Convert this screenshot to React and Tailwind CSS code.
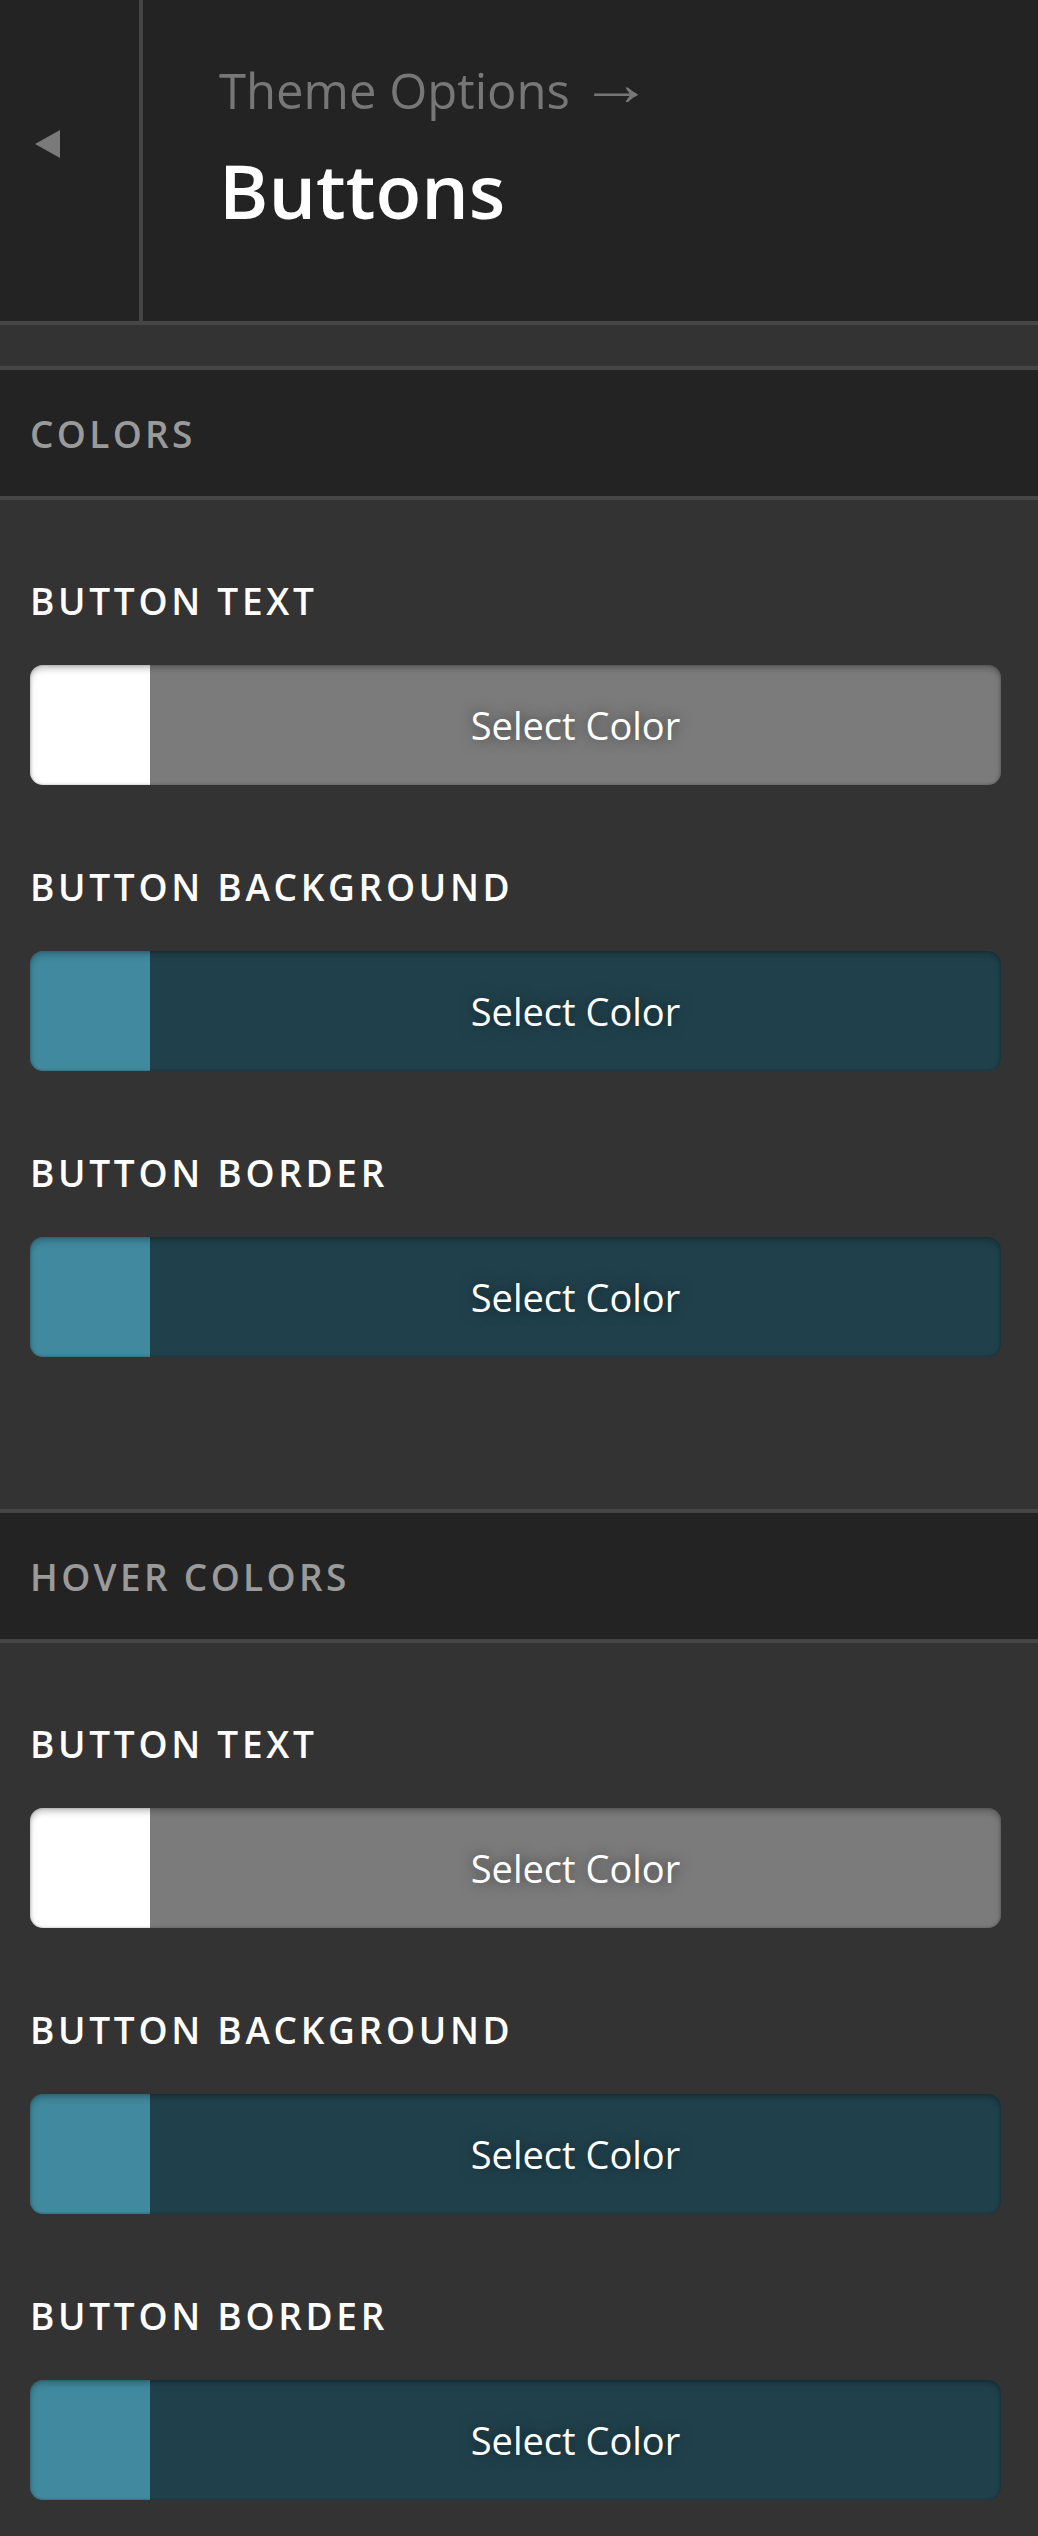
import React from "react";

const fields = [
  { label: "BUTTON TEXT", swatch: "bg-white", bar: "bg-[#7b7b7b]" },
  { label: "BUTTON BACKGROUND", swatch: "bg-[#40899e]", bar: "bg-[#20414c]" },
  { label: "BUTTON BORDER", swatch: "bg-[#40899e]", bar: "bg-[#20414c]" },
];

const ColorField = ({ label, swatch, bar }) => {
  return (
    <div className="flex flex-col">
      <label className="text-white text-[37px] leading-[37px] font-semibold tracking-[0.1em]">
        {label}
      </label>
      <button className="relative mt-[46px] flex h-[120px] w-full overflow-hidden rounded-[13px]">
        <span className={`${swatch} h-full w-[120px] shrink-0`} />
        <span
          className={`${bar} flex h-full flex-1 items-center justify-center text-[38px] text-white [text-shadow:0_0_14px_rgba(0,0,0,0.5)]`}
        >
          Select Color
        </span>
        <span className="pointer-events-none absolute inset-0 rounded-[13px] shadow-[inset_0_4px_6px_rgba(0,0,0,0.22),inset_0_0_3px_rgba(0,0,0,0.3)]" />
      </button>
    </div>
  );
};

const Section = ({ title }) => {
  return (
    <>
      <div className="flex h-[130px] items-center border-b-4 border-[#464646] bg-[#232323] pl-[30px]">
        <h2 className="text-[37px] leading-none font-semibold tracking-[0.09em] text-[#9a9a9a]">
          {title}
        </h2>
      </div>
      <div className="flex flex-col gap-[83px] border-b-4 border-[#464646] bg-[#333333] pt-[82px] pb-[152px] pl-[30px] pr-[37px]">
        {fields.map((f) => (
          <ColorField key={f.label} {...f} />
        ))}
      </div>
    </>
  );
};

const App = () => {
  return (
    <div className="min-h-screen w-full bg-[#333333] font-['Open_Sans',sans-serif]">
      <header className="flex h-[325px] border-b-4 border-[#464646] bg-[#232323]">
        <div className="w-[143px] shrink-0 border-r-4 border-[#464646] pt-[130px] pl-[35px]">
          <svg width="25" height="28" viewBox="0 0 25 28">
            <polygon points="0,14 25,0 25,28" fill="#7a7a7a" />
          </svg>
        </div>
        <div className="flex flex-col pt-[66px] pl-[76px]">
          <p className="text-[49px] leading-none text-[#777777]">
            Theme Options{" "}
            <span className="-ml-[4px] inline-block origin-left -translate-y-[9px] scale-x-150 scale-y-125 leading-none">
              →
            </span>
          </p>
          <h1 className="mt-[38px] text-[75px] leading-none font-semibold text-white">
            Buttons
          </h1>
        </div>
      </header>
      <div className="h-[45px] border-b-4 border-[#464646] bg-[#333333]" />
      <Section title="COLORS" />
      <Section title="HOVER COLORS" />
    </div>
  );
};

export default App;
